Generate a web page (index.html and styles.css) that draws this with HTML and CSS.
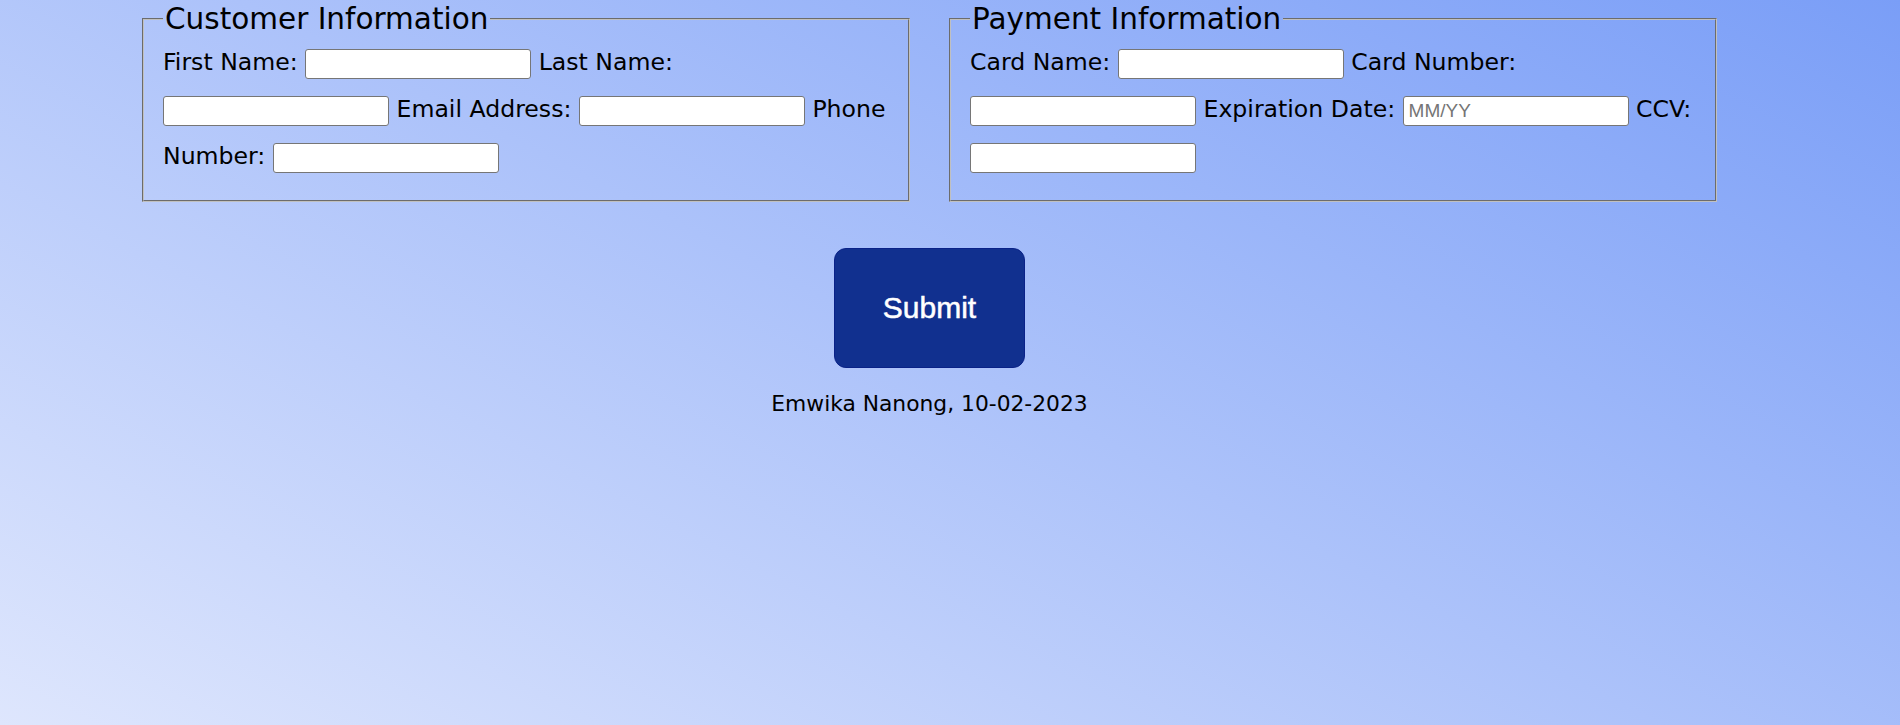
FILE: index.html
```html
<!DOCTYPE html>
<html lang="en">
<head>
<meta charset="utf-8">
<title>Order Form</title>
<link rel="stylesheet" href="styles.css">
</head>
<body>
<main class="page">
  <form class="order-form">
    <div class="sections">
      <fieldset class="section">
        <legend class="section-title">Customer Information</legend>
        <label class="field-label" for="first">First Name:</label> <input class="field" id="first" type="text">
        <label class="field-label" for="last">Last Name:</label> <input class="field" id="last" type="text">
        <label class="field-label" for="email">Email Address:</label> <input class="field" id="email" type="email">
        <label class="field-label" for="phone">Phone Number:</label> <input class="field" id="phone" type="tel">
      </fieldset>
      <fieldset class="section">
        <legend class="section-title">Payment Information</legend>
        <label class="field-label" for="cname">Card Name:</label> <input class="field" id="cname" type="text">
        <label class="field-label" for="cnum">Card Number:</label> <input class="field" id="cnum" type="text">
        <label class="field-label" for="exp">Expiration Date:</label> <input class="field" id="exp" type="text" placeholder="MM/YY">
        <label class="field-label" for="ccv">CCV:</label> <input class="field" id="ccv" type="text">
      </fieldset>
    </div>
    <div class="actions">
      <button class="submit-btn" type="submit">Submit</button>
    </div>
  </form>
  <p class="credit">Emwika Nanong, 10-02-2023</p>
</main>
</body>
</html>
```
FILE: styles.css
```css
html {
  min-height: 100%;
  background: linear-gradient(27deg, #dee6fd 0%, #7a9ef7 100%);
}

body {
  margin: 0;
  padding: 0 41px 0 0;
  min-height: 725px;
  font-family: "DejaVu Sans", "Verdana", sans-serif;
  color: #000;
}

.page {
  width: 1575px;
  margin: 0 auto;
}

.sections {
  display: flex;
  gap: 39px;
}

.section {
  flex: 0 0 768px;
  box-sizing: border-box;
  margin: 0;
  padding: 1px 14px 20px 19px;
  border: 2px groove #c0c0c0;
  font-size: 23.6px;
  line-height: 47px;
  min-width: 0;
}

.section-title {
  padding: 0 2px;
  font-size: 29.5px;
  line-height: 38px;
}

.field-label {
  vertical-align: baseline;
}

.field {
  box-sizing: border-box;
  width: 226px;
  height: 30px;
  padding: 1px 5px;
  margin: 0;
  border: 1px solid #767676;
  border-radius: 3px;
  background: #fff;
  font-family: "Liberation Sans", Arial, sans-serif;
  font-size: 19px;
  vertical-align: middle;
}

.field::placeholder {
  color: #757575;
}

.actions {
  display: flex;
  justify-content: center;
  margin-top: 46px;
}

.submit-btn {
  width: 191px;
  height: 120px;
  box-sizing: border-box;
  border: 1px solid #0a2288;
  border-radius: 12px;
  background: #11308f;
  color: #fff;
  font-family: "Liberation Sans", Arial, sans-serif;
  font-size: 30px;
  -webkit-text-stroke: 0.5px #fff;
  cursor: pointer;
}

.credit {
  margin: 23px 0 0;
  text-align: center;
  font-size: 21.8px;
}
```
